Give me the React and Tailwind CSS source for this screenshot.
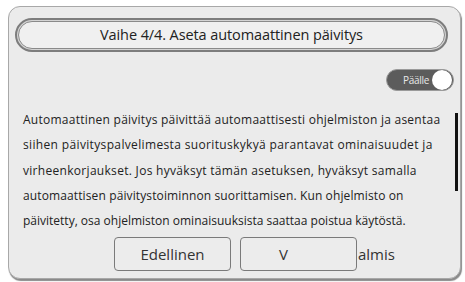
export default function App() {
  const lines = [
    ['Automaattinen päivitys päivittää automaattisesti ohjelmiston ja asentaa', 'tracking-[0.25px]'],
    ['siihen päivityspalvelimesta suorituskykyä parantavat ominaisuudet ja', 'tracking-[0.35px]'],
    ['virheenkorjaukset. Jos hyväksyt tämän asetuksen, hyväksyt samalla', 'tracking-[0.3px]'],
    ['automaattisen päivitystoiminnon suorittamisen. Kun ohjelmisto on', 'tracking-[0.12px]'],
    ['päivitetty, osa ohjelmiston ominaisuuksista saattaa poistua käytöstä.', 'tracking-normal'],
  ];

  return (
    <div className="w-[465px] h-[282px] bg-white pt-[6px] pl-[8px]" style={{ fontFamily: '"Open Sans", sans-serif' }}>
      <div className="relative w-[453px] h-[273px] rounded-[12px] border border-[#a8a8a8] bg-[#ebebeb] shadow-[1px_2px_1px_#8a8a8a] flex flex-col">
        {/* title */}
        <div className="mt-[11px] ml-[6px] w-[433px] h-[34px] rounded-full border-2 border-[#7d7d7d] p-[1px] bg-[#d4d4d4]">
          <div className="h-full rounded-full border border-[#8a8a8a] bg-[#f0f0f0] flex items-center justify-center text-[14.5px] text-[#222] tracking-[-0.1px]">
            Vaihe 4/4. Aseta automaattinen päivitys
          </div>
        </div>

        {/* toggle */}
        <div className="flex justify-end mt-[17px] pr-[6px]">
          <div className="w-[68px] h-[22px] rounded-full bg-[#5c5c5c] border border-[#9a9a9a] flex items-center justify-between pl-[16px] pr-[1px] overflow-hidden">
            <span className="text-[10px] text-[#e8e8e8] leading-none tracking-[-0.3px]">Päälle</span>
            <span className="w-[20px] h-[20px] shrink-0 rounded-full bg-white -ml-[8px]" />
          </div>
        </div>

        {/* body text */}
        <div className="flex mt-[16px]">
          <div className="pl-[14px] flex-1 text-[12px] text-[#222] leading-[25.3px]">
            {lines.map(([l, t], i) => (
              <div key={i} className={`whitespace-nowrap ${t}`}>{l}</div>
            ))}
          </div>
          <div className="w-[3px] h-[78px] bg-[#111] mt-[6px] mr-[2px]" />
        </div>

        {/* buttons */}
        <div className="flex items-center pl-[105px] mt-[4px] gap-[9px] text-[15px] text-[#333]">
          <div className="w-[117px] h-[34px] rounded-[4px] border border-[#7a7a7a] bg-[#ececec] flex items-center justify-center">
            Edellinen
          </div>
          <div className="w-[117px] h-[34px] rounded-[4px] border border-[#7a7a7a] bg-[#ececec] flex items-center justify-center pr-[30px]">
            V
          </div>
          <span className="-ml-[8px]">almis</span>
        </div>
      </div>
    </div>
  );
}
